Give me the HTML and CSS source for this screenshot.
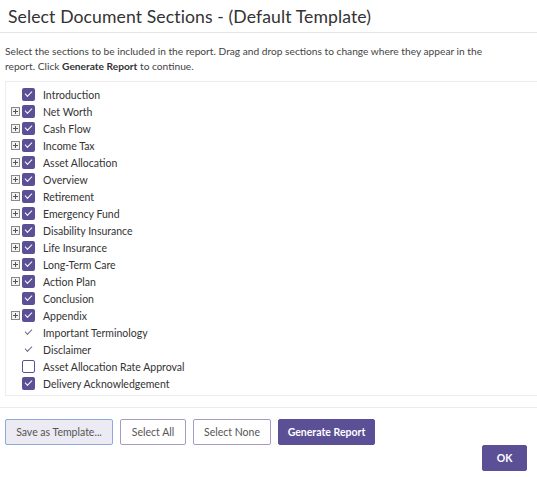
FILE: index.html
```html
<!DOCTYPE html>
<html>
<head>
<meta charset="utf-8">
<link rel="stylesheet" href="styles.css">
</head>
<body>
<div class="dialog">
  <div class="header"><h1 class="title">Select Document Sections - (Default Template)</h1></div>
  <div class="body">
    <p class="desc">Select the sections to be included in the report. Drag and drop sections to change where they appear in the report. Click <b>Generate Report</b> to continue.</p>
    <ul class="tree">
      <li class="row"><span class="exp"></span><span class="cb on"></span><span class="lbl">Introduction</span></li>
      <li class="row"><span class="exp plus"></span><span class="cb on"></span><span class="lbl">Net Worth</span></li>
      <li class="row"><span class="exp plus"></span><span class="cb on"></span><span class="lbl">Cash Flow</span></li>
      <li class="row"><span class="exp plus"></span><span class="cb on"></span><span class="lbl">Income Tax</span></li>
      <li class="row"><span class="exp plus"></span><span class="cb on"></span><span class="lbl">Asset Allocation</span></li>
      <li class="row"><span class="exp plus"></span><span class="cb on"></span><span class="lbl">Overview</span></li>
      <li class="row"><span class="exp plus"></span><span class="cb on"></span><span class="lbl">Retirement</span></li>
      <li class="row"><span class="exp plus"></span><span class="cb on"></span><span class="lbl">Emergency Fund</span></li>
      <li class="row"><span class="exp plus"></span><span class="cb on"></span><span class="lbl">Disability Insurance</span></li>
      <li class="row"><span class="exp plus"></span><span class="cb on"></span><span class="lbl">Life Insurance</span></li>
      <li class="row"><span class="exp plus"></span><span class="cb on"></span><span class="lbl">Long-Term Care</span></li>
      <li class="row"><span class="exp plus"></span><span class="cb on"></span><span class="lbl">Action Plan</span></li>
      <li class="row"><span class="exp"></span><span class="cb on"></span><span class="lbl">Conclusion</span></li>
      <li class="row"><span class="exp plus"></span><span class="cb on"></span><span class="lbl">Appendix</span></li>
      <li class="row"><span class="exp"></span><span class="cb tick"></span><span class="lbl">Important Terminology</span></li>
      <li class="row"><span class="exp"></span><span class="cb tick"></span><span class="lbl">Disclaimer</span></li>
      <li class="row"><span class="exp"></span><span class="cb off"></span><span class="lbl">Asset Allocation Rate Approval</span></li>
      <li class="row"><span class="exp"></span><span class="cb on"></span><span class="lbl">Delivery Acknowledgement</span></li>
    </ul>
  </div>
  <div class="footer">
    <div class="actions">
      <button class="btn ghost">Save as Template...</button>
      <button class="btn outline all">Select All</button>
      <button class="btn outline none">Select None</button>
      <button class="btn primary gen">Generate Report</button>
    </div>
    <div class="ok-row"><button class="btn primary ok">OK</button></div>
  </div>
</div>
</body>
</html>
```

FILE: styles.css
```css
html, body { margin: 0; padding: 0; background: #fff; }
body { font-family: Lato, "Open Sans", sans-serif; color: #3a3a3a; }
.dialog { width: 537px; height: 477px; overflow: hidden; }
.header { padding: 6px 8px 4px; border-bottom: 1px solid #e6e6e6; }
.title { margin: 0; font-weight: 400; font-size: 17.6px; line-height: 22px; color: #333; letter-spacing: 0.1px; }
.body { padding: 11px 0 0 5px; }
.desc { margin: 0 0 7px; padding-right: 40px; font-size: 10.2px; line-height: 15px; color: #444; }
.desc b { font-weight: 700; color: #333; }
.tree { list-style: none; margin: 0; padding: 4px 0 3px 5px; border: 1px solid #ececec; border-right: none; }
.row { display: flex; align-items: center; height: 17px; }
.exp { width: 9px; height: 9px; margin-right: 2px; box-sizing: border-box; position: relative; }
.exp.plus { border: 1px solid #888; background: #f2f2f2; }
.exp.plus::before { content: ""; position: absolute; left: 1px; top: 3px; width: 5px; height: 1px; background: #555; }
.exp.plus::after { content: ""; position: absolute; left: 3px; top: 1px; width: 1px; height: 5px; background: #555; }
.cb { width: 13px; height: 13px; box-sizing: border-box; border-radius: 2px; position: relative; margin-right: 8px; }
.cb.on { background: #5b4f96; }
.cb.on::after { content: ""; position: absolute; left: 3px; top: 3px; width: 6px; height: 3px; border-left: 1.5px solid #fff; border-bottom: 1.5px solid #fff; transform: rotate(-45deg); }
.cb.off { border: 1px solid #5b4f96; background: #fff; }
.cb.tick::after { content: ""; position: absolute; left: 3px; top: 3px; width: 6px; height: 3px; border-left: 1px solid #6b6b8a; border-bottom: 1px solid #6b6b8a; transform: rotate(-45deg); }
.lbl { font-size: 10.5px; color: #333; }
.footer { margin-top: 11px; border-top: 1px solid #ececec; padding: 11px 0 0 5px; }
.actions { display: flex; gap: 7px; }
.btn { font-family: inherit; font-size: 10.5px; height: 26px; padding: 0; border-radius: 2px; cursor: pointer; white-space: nowrap; box-sizing: border-box; }
.btn.ghost { background: #eceaf2; color: #555; border: 1px solid #8ea8e2; width: 108px; }
.btn.outline { background: #fff; color: #555; border: 1px solid #a39cc6; }
.btn.all { width: 66px; }
.btn.none { width: 78px; }
.btn.primary { background: #5b4f96; color: #fff; border: 1px solid #5b4f96; font-weight: 700; }
.btn.gen { width: 97px; }
.ok-row { display: flex; justify-content: flex-end; padding-right: 10px; }
.btn.ok { width: 45px; }
```
